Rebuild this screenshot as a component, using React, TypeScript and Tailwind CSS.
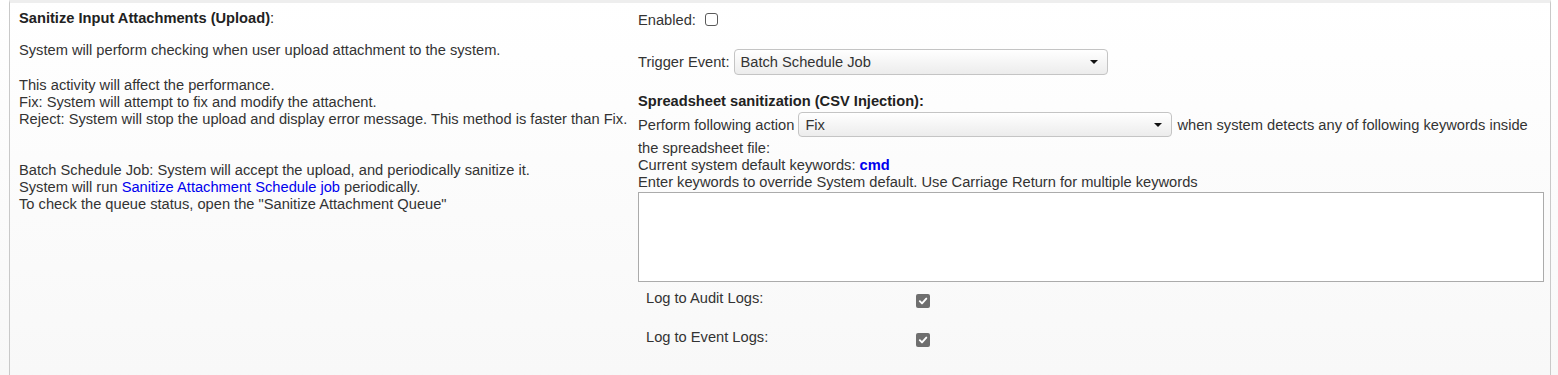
import type {ReactNode} from 'react';

const font = {fontFamily: '"Liberation Sans", Arial, sans-serif'};

function Caret() {
  return (
    <svg width="8" height="4" viewBox="0 0 8 4" className="shrink-0">
      <path d="M0 0h8L4 4z" fill="#111" />
    </svg>
  );
}

function Select({value, className}: {value: string; className?: string}) {
  return (
    <div
      className={`flex w-[374px] items-center justify-between rounded-[4px] border border-[#c4c4c4] bg-gradient-to-b from-white to-[#ececec] pr-[9px] pl-[6px] ${className ?? ''}`}
    >
      <span>{value}</span>
      <Caret />
    </div>
  );
}

function Checked({className}: {className?: string}) {
  return (
    <span className={`flex h-[14px] w-[14px] items-center justify-center rounded-[2px] bg-[#6f6f6f] ${className ?? ''}`}>
      <svg width="10" height="10" viewBox="0 0 10 10">
        <path d="M1.8 5.2 4 7.4 8.3 2.6" fill="none" stroke="white" strokeWidth="1.9" strokeLinecap="round" strokeLinejoin="round" />
      </svg>
    </span>
  );
}

function Line({children, className}: {children: ReactNode; className?: string}) {
  return <div className={`leading-[17px] ${className ?? ''}`}>{children}</div>;
}

export default function App() {
  return (
    <div className="h-[375px] w-full bg-gradient-to-b from-white to-[#f8f8f8] text-[14.67px] text-[#333]" style={font}>
      <div className="ml-[9px] flex h-full w-[1542px] border-x border-t-[3px] border-x-[#c9c9c9] border-t-[#eeeeee]">
        {/* colonne description */}
        <div className="w-[619px] shrink-0 pt-[7px] pl-[9px]">
          <Line className="font-bold text-[#222]">
            Sanitize Input Attachments (Upload)<span className="font-normal">:</span>
          </Line>
          <Line className="mt-[15px]">System will perform checking when user upload attachment to the system.</Line>
          <Line className="mt-[18px]">This activity will affect the performance.</Line>
          <Line>Fix: System will attempt to fix and modify the attachent.</Line>
          <Line>Reject: System will stop the upload and display error message. This method is faster than Fix.</Line>
          <Line className="mt-[34px]">Batch Schedule Job: System will accept the upload, and periodically sanitize it.</Line>
          <Line>
            System will run <span className="text-[#0000ee]">Sanitize Attachment Schedule job</span> periodically.
          </Line>
          <Line>To check the queue status, open the "Sanitize Attachment Queue"</Line>
        </div>

        {/* colonne réglages */}
        <div className="min-w-0 flex-1 pt-[8px] pl-[9px]">
          <div className="flex h-[17px] items-center">
            <span>Enabled:</span>
            <span className="ml-[9px] h-[13px] w-[13px] rounded-[3px] border border-[#5a5a5a] bg-white" />
          </div>

          <div className="mt-[21px] flex h-[26px] items-center">
            <span>Trigger Event:</span>
            <Select value="Batch Schedule Job" className="ml-[4px] h-[26px]" />
          </div>

          <Line className="mt-[18px] font-bold text-[#222]">Spreadsheet sanitization (CSV Injection):</Line>

          <div className="mt-[2px] flex h-[25px] items-center whitespace-nowrap">
            <span>Perform following action</span>
            <Select value="Fix" className="ml-[4px] h-[25px]" />
            <span className="ml-[5px]">when system detects any of following keywords inside</span>
          </div>
          <Line className="mt-[3px]">the spreadsheet file:</Line>
          <Line>
            Current system default keywords: <span className="font-bold text-[#0000ee]">cmd</span>
          </Line>
          <Line>Enter keywords to override System default. Use Carriage Return for multiple keywords</Line>
          <textarea className="mt-[1px] block h-[90px] w-[906px] resize-none border border-[#ababab] bg-white outline-none" />

          <div className="mt-[8px] flex">
            <Line className="w-[278px] pl-[8px]">Log to Audit Logs:</Line>
            <Checked className="mt-[4px]" />
          </div>
          <div className="mt-[21px] flex">
            <Line className="w-[278px] pl-[8px]">Log to Event Logs:</Line>
            <Checked className="mt-[4px]" />
          </div>
        </div>
      </div>
    </div>
  );
}
